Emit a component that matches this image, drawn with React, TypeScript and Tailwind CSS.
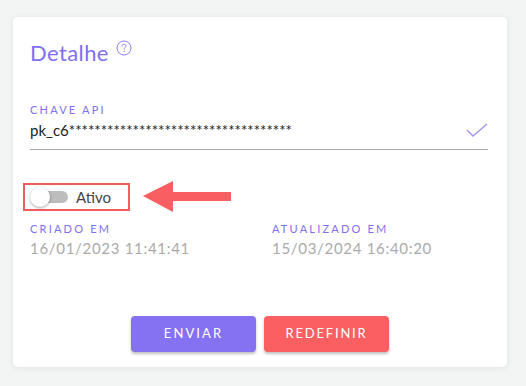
import React from 'react';

const Check = () => (
  <svg width="22" height="14" viewBox="0 0 22 14" fill="none">
    <path d="M1 7 L7 13 L21 1" stroke="#9d93f0" strokeWidth="1.3" />
  </svg>
);

const Arrow = () => (
  <svg width="90" height="32" viewBox="0 0 90 32">
    <polygon points="0,15 30,0 30,11 88,11 88,20 30,20 30,31" fill="#f95f62" />
  </svg>
);

const Field = ({ label, value }: { label: string; value: string }) => (
  <div className="flex flex-col">
    <span className="text-[11px] leading-[14px] tracking-[0.2em] text-[#8070f0]">{label}</span>
    <span className="text-[15px] leading-[22px] mt-[1px] tracking-[0.7px] text-[#aaaaaa]">{value}</span>
  </div>
);

export default function App() {
  return (
    <div
      className="w-[526px] h-[386px] bg-[#f3f4f4] pt-[17px] pl-[13px]"
      style={{ fontFamily: 'Lato, "Open Sans", sans-serif' }}
    >
      <div className="w-[494px] h-[350px] bg-white rounded-[5px] shadow-[0_1px_6px_rgba(0,0,0,0.08)] pl-[17px] pr-[19px] pt-[21px] flex flex-col">
        <div className="flex items-start gap-[7px]">
          <h2 className="text-[22px] leading-[30px] tracking-[0.4px] text-[#8070f0]">Detalhe</h2>
          <svg width="16" height="16" viewBox="0 0 16 16" className="mt-[2px]" fill="none">
            <circle cx="8" cy="8" r="7" stroke="#8a7cf2" strokeWidth="1" />
            <path d="M6 6.3 C6 4.9 7 4.3 8 4.3 C9.1 4.3 10 5 10 6 C10 7.2 8.3 7.4 8.3 8.8 V9.4" stroke="#8a7cf2" strokeWidth="1" />
            <circle cx="8.3" cy="11.4" r="0.6" fill="#8a7cf2" />
          </svg>
        </div>

        <div className="mt-[35px] flex flex-col">
          <span className="text-[11px] leading-[14px] tracking-[0.2em] text-[#8070f0]">CHAVE API</span>
          <div className="flex items-center justify-between border-b border-[#a9a9a9] pb-[8px] mt-[2px]">
            <span className="text-[15px] leading-[22px] text-[#222]">pk_c6***********************************</span>
            <Check />
          </div>
        </div>

        <div className="mt-[31px] flex items-center">
          <div className="relative border-2 border-[#f25c5f] w-[107px] h-[28px] -ml-[7px] flex items-center">
            <div className="relative ml-[5px] w-[38px] h-[20px] flex items-center">
              <div className="w-[37px] h-[12px] rounded-full bg-[#bdbdbd] ml-[1px]"></div>
              <div className="absolute left-0 top-0 w-[20px] h-[20px] rounded-full bg-white shadow-[0_1px_3px_rgba(0,0,0,0.35)]"></div>
            </div>
            <span className="ml-[8px] text-[15px] leading-[20px] text-[#444]">Ativo</span>
          </div>
          <div className="ml-[13px]">
            <Arrow />
          </div>
        </div>

        <div className="mt-[9px] grid grid-cols-[242px_1fr]">
          <Field label="CRIADO EM" value="16/01/2023 11:41:41" />
          <Field label="ATUALIZADO EM" value="15/03/2024 16:40:20" />
        </div>

        <div className="mt-[57px] flex justify-center gap-[8px] pl-[2px]">
          <button className="w-[125px] h-[36px] rounded-[4px] bg-[#8472f2] text-white text-[13px] tracking-[0.16em] shadow-[0_2px_3px_rgba(0,0,0,0.25)]">
            ENVIAR
          </button>
          <button className="w-[125px] h-[36px] rounded-[4px] bg-[#fb5f62] text-white text-[13px] tracking-[0.14em] shadow-[0_2px_3px_rgba(0,0,0,0.25)]">
            REDEFINIR
          </button>
        </div>
      </div>
    </div>
  );
}
